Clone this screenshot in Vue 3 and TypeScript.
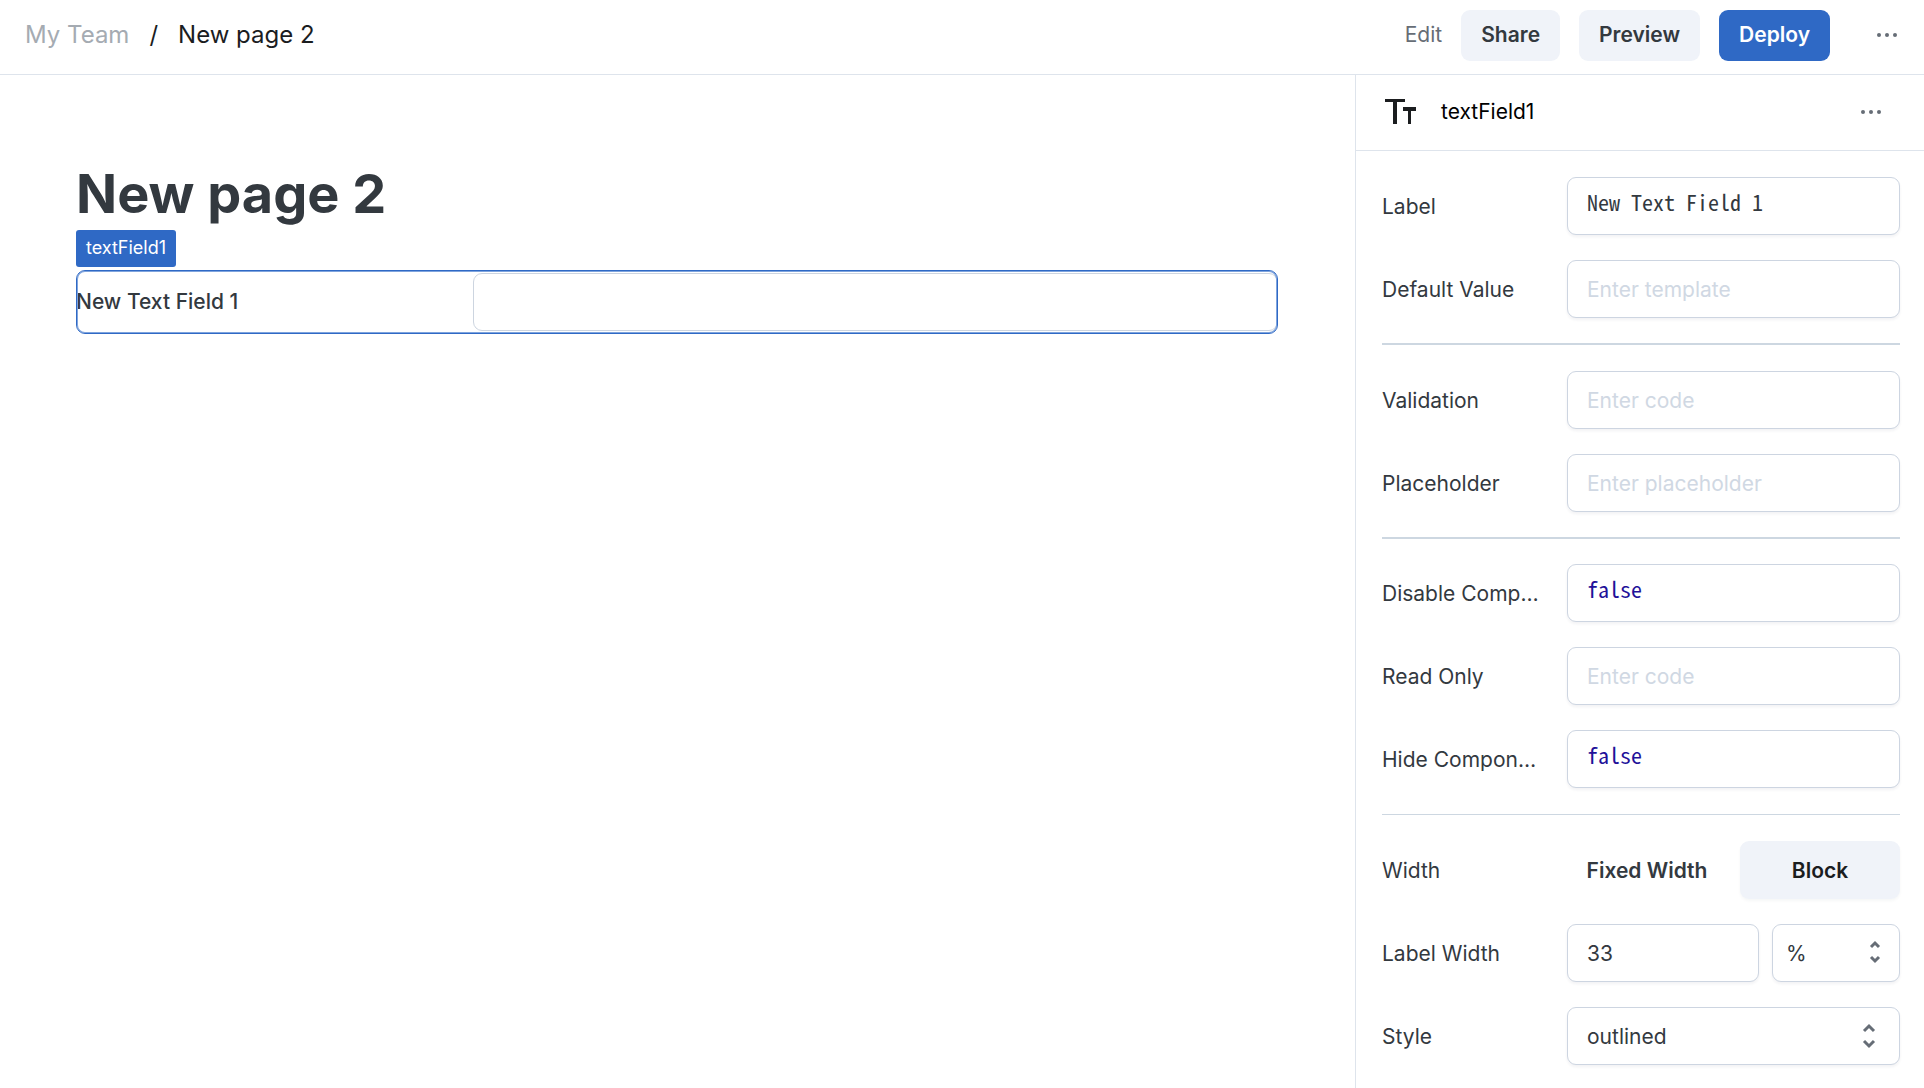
<script setup lang="ts">
import { ref } from 'vue'

type Row = { id: string; label: string; value: string; placeholder: string; kind: 'text' | 'code' }

const groups = ref<Row[][]>([
  [
    { id: 'label', label: 'Label', value: 'New Text Field 1', placeholder: 'Enter template', kind: 'text' },
    { id: 'default-value', label: 'Default Value', value: '', placeholder: 'Enter template', kind: 'text' },
  ],
  [
    { id: 'validation', label: 'Validation', value: '', placeholder: 'Enter code', kind: 'code' },
    { id: 'placeholder', label: 'Placeholder', value: '', placeholder: 'Enter placeholder', kind: 'text' },
  ],
  [
    { id: 'disabled', label: 'Disable Component', value: 'false', placeholder: 'Enter code', kind: 'code' },
    { id: 'read-only', label: 'Read Only', value: '', placeholder: 'Enter code', kind: 'code' },
    { id: 'hidden', label: 'Hide Component', value: 'false', placeholder: 'Enter code', kind: 'code' },
  ],
])

const widthMode = ref<'fixed' | 'block'>('block')
const labelWidth = ref('33')
const unit = ref('%')
const variant = ref('outlined')
const fieldValue = ref('')
</script>

<template>
  <div class="app">
    <header class="topbar">
      <nav class="crumbs" aria-label="Breadcrumb">
        <a href="#" class="team">My Team</a>
        <span class="slash">/</span>
        <span class="current">New page 2</span>
      </nav>
      <div class="actions">
        <span class="mode">Edit</span>
        <button type="button" class="btn">Share</button>
        <button type="button" class="btn">Preview</button>
        <button type="button" class="btn primary">Deploy</button>
        <button type="button" class="dots top-dots" aria-label="Page menu">
          <svg width="20" height="6" viewBox="0 0 20 6"><circle cx="2" cy="3" r="2" /><circle cx="10" cy="3" r="2" /><circle cx="18" cy="3" r="2" /></svg>
        </button>
      </div>
    </header>

    <div class="body">
      <main class="canvas">
        <h1>New page 2</h1>
        <span class="tag">textField1</span>
        <div class="selected">
          <label for="preview-field">New Text Field 1</label>
          <input id="preview-field" v-model="fieldValue" type="text" />
        </div>
      </main>

      <aside class="panel">
        <div class="panel-head">
          <svg class="type-icon" width="32" height="26" viewBox="0 0 32 26"><path d="M0 0h20v3h-8v22H8V3H0zM18 8h13v4h-5v13h-3V12h-5z" /></svg>
          <span class="name">textField1</span>
          <button type="button" class="dots" aria-label="Component menu">
            <svg width="20" height="6" viewBox="0 0 20 6"><circle cx="2" cy="3" r="2" /><circle cx="10" cy="3" r="2" /><circle cx="18" cy="3" r="2" /></svg>
          </button>
        </div>

        <form class="props" @submit.prevent>
          <template v-for="(group, g) in groups" :key="g">
            <div v-for="row in group" :key="row.id" class="row">
              <label class="label" :for="row.id">{{ row.label }}</label>
              <input
                :id="row.id"
                v-model="row.value"
                type="text"
                class="box"
                :class="{ mono: row.value, keyword: row.value && row.kind === 'code' }"
                :placeholder="row.placeholder"
              />
            </div>
            <hr :class="{ thin: g === groups.length - 1 }" />
          </template>

          <div class="row">
            <span id="width-label" class="label">Width</span>
            <div class="toggle" role="group" aria-labelledby="width-label">
              <button type="button" :class="{ on: widthMode === 'fixed' }" @click="widthMode = 'fixed'">Fixed Width</button>
              <button type="button" :class="{ on: widthMode === 'block' }" @click="widthMode = 'block'">Block</button>
            </div>
          </div>

          <div class="row">
            <label class="label" for="label-width">Label Width</label>
            <div class="pair">
              <input id="label-width" v-model="labelWidth" type="text" class="box" />
              <div class="select small">
                <select v-model="unit" class="box" aria-label="Label width unit">
                  <option>%</option>
                  <option>px</option>
                </select>
                <svg width="12" height="24" viewBox="0 0 12 24"><path d="M2 7l4-4 4 4M2 17l4 4 4-4" /></svg>
              </div>
            </div>
          </div>

          <div class="row">
            <label class="label" for="style">Style</label>
            <div class="select">
              <select id="style" v-model="variant" class="box">
                <option>outlined</option>
                <option>filled</option>
              </select>
              <svg width="14" height="26" viewBox="0 0 14 26"><path d="M2 8l5-5 5 5M2 18l5 5 5-5" /></svg>
            </div>
          </div>
        </form>
      </aside>
    </div>
  </div>
</template>

<style>
body {
  background: #fff;
}
</style>

<style scoped>
.app {
  min-height: 100vh;
  display: flex;
  flex-direction: column;
  font-family: Inter, 'Liberation Sans', sans-serif;
  font-size: 21px;
  line-height: 28px;
  color: #33393f;
}

.app *,
.app {
  box-sizing: border-box;
}

button,
input,
select {
  font: inherit;
  color: inherit;
  margin: 0;
}

button {
  border: 0;
  background: none;
  padding: 0;
}

.topbar {
  height: 75px;
  padding: 0 25px 4px;
  border-bottom: 1px solid #dee4ec;
  display: flex;
  align-items: center;
  justify-content: space-between;
}

.crumbs {
  display: flex;
  gap: 20px;
  font-size: 24px;
  color: #1b1d1f;
}

.team {
  color: #a5abb2;
  text-decoration: none;
}

.actions {
  display: flex;
  align-items: center;
  gap: 19px;
}

.mode {
  color: #666d76;
}

.btn {
  height: 51px;
  padding: 0 20px;
  border-radius: 9px;
  background: #f0f3f9;
  font-weight: 600;
}

.btn.primary {
  background: #2f69c5;
  color: #fff;
}

.dots {
  display: flex;
  padding: 8px 0;
}

.dots svg {
  fill: #666d76;
}

.top-dots {
  margin: 0 2px 0 28px;
}

.body {
  flex: 1;
  display: flex;
}

.canvas {
  flex: 1;
  min-width: 0;
  padding: 83px 77px 0 76px;
}

h1 {
  margin: 0;
  font-size: 54px;
  line-height: 72px;
  font-weight: 700;
}

.tag {
  display: block;
  width: max-content;
  padding: 4px 10px 5px;
  border-radius: 3px;
  background: #2f69c5;
  color: #fff;
  font-size: 18px;
}

.selected {
  position: relative;
  margin-top: 3px;
  height: 64px;
  display: grid;
  grid-template-columns: 33% 1fr;
  align-items: center;
  font-weight: 500;
}

.selected::after {
  content: '';
  position: absolute;
  inset: 0;
  border: 1px solid #2f69c5;
  border-radius: 9px;
  box-shadow: inset 0 0 0 1px #7fa4dd;
  pointer-events: none;
}

.selected input {
  width: 100%;
  height: 58px;
  border: 1px solid #cdd5e0;
  border-radius: 9px;
  padding: 0 19px;
}

.panel {
  width: 569px;
  flex: none;
  border-left: 1px solid #dee4ec;
}

.panel-head {
  height: 76px;
  padding: 0 43px 1px 29px;
  border-bottom: 1px solid #dee4ec;
  display: flex;
  align-items: center;
}

.type-icon {
  fill: #1b1d1f;
}

.name {
  flex: 1;
  margin-left: 24px;
  color: #000;
}

.props {
  padding: 26px 24px 22px 26px;
  display: flex;
  flex-direction: column;
  gap: 25px;
}

.row {
  display: grid;
  grid-template-columns: 160px 1fr;
  column-gap: 25px;
  align-items: center;
}

.label {
  padding-top: 2px;
  overflow: hidden;
  text-overflow: ellipsis;
  white-space: nowrap;
}

.box {
  display: block;
  width: 100%;
  height: 58px;
  min-width: 0;
  padding: 0 19px;
  border: 1px solid #cdd5e1;
  border-radius: 9px;
  background: #fff;
  box-shadow: 0 2px 3px rgba(30, 40, 60, 0.06);
  appearance: none;
}

.box::placeholder {
  color: #d0d8e3;
  opacity: 1;
}

.mono {
  padding-bottom: 10px;
  font-family: 'Noto Sans Mono CJK SC', 'Liberation Mono', monospace;
  font-size: 22px;
}

.keyword {
  color: #221199;
}

hr {
  width: 100%;
  height: 2px;
  margin: 0;
  border: 0;
  background: #cdd7e1;
}

hr:first-of-type {
  margin-bottom: 1px;
}

hr.thin {
  height: 1px;
  margin: 1px 0;
}

.toggle {
  display: grid;
  grid-template-columns: 1fr 1fr;
  gap: 13px;
}

.toggle button {
  height: 58px;
  padding-top: 2px;
  border-radius: 9px;
  font-weight: 600;
}

.toggle .on {
  background: #f0f3f9;
  color: #1b1d1f;
  box-shadow: 0 2px 3px rgba(30, 40, 60, 0.04);
}

.pair {
  display: grid;
  grid-template-columns: 3fr 2fr;
  gap: 13px;
}

.select {
  position: relative;
}

.select .box {
  padding-top: 2px;
}

.select svg {
  position: absolute;
  right: 24px;
  top: 16px;
  fill: none;
  stroke: #666d76;
  stroke-width: 3;
  pointer-events: none;
}

.small .box {
  padding: 2px 13px 0;
}

.small svg {
  right: 19px;
}
</style>
